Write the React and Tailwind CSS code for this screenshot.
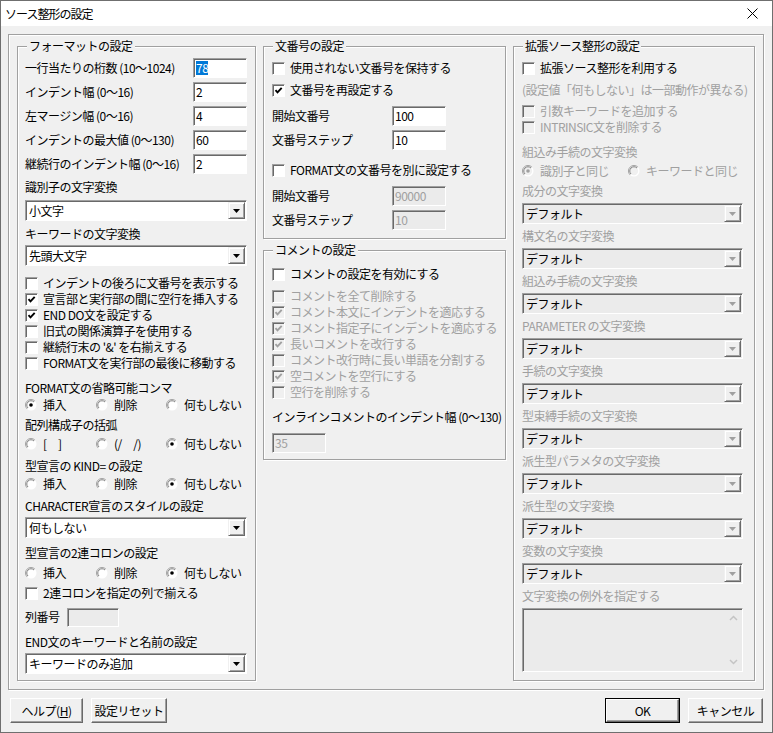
import React from 'react';

function TextBox({ value, selected = false, disabled = false, w = 'w-[54px]', h = 'h-[20px]' }) {
  return (
    <div
      className={`${w} ${h} shrink-0 flex items-center pl-[2px] border border-t-[#a0a0a0] border-l-[#a0a0a0] border-r-white border-b-white shadow-[inset_1px_1px_0_#696969] ${
        disabled ? 'bg-[#ebebeb] text-[#a0a0a0]' : 'bg-white'
      }`}
    >
      {selected ? <span className="bg-[#0078d7] text-white leading-[14px]">{value}</span> : value}
    </div>
  );
}

function Combo({ value, disabled = false, w = 'w-[222px]', className = '' }) {
  return (
    <div
      className={`${w} h-[21px] shrink-0 flex items-center justify-between border border-t-[#a0a0a0] border-l-[#a0a0a0] border-r-white border-b-white shadow-[inset_1px_1px_0_#696969] ${
        disabled ? 'bg-[#ebebeb]' : 'bg-white'
      } ${className}`}
    >
      <span className="pl-[3px] whitespace-nowrap">{value}</span>
      <div className="w-[17px] h-[17px] mr-[1px] flex items-center justify-center bg-[#f0f0f0] border border-t-[#f0f0f0] border-l-[#f0f0f0] border-r-[#696969] border-b-[#696969] shadow-[inset_1px_1px_0_#fff,inset_-1px_-1px_0_#a0a0a0]">
        <svg width="7" height="4" viewBox="0 0 7 4">
          <path d="M0 0h7L3.5 4z" fill={disabled ? '#a0a0a0' : '#000'} />
        </svg>
      </div>
    </div>
  );
}

function Check({ checked = false, disabled = false, label, className = '' }) {
  return (
    <div className={`h-[16px] flex items-center ${className}`}>
      <div
        className={`w-[13px] h-[13px] shrink-0 flex items-center justify-center border border-t-[#a0a0a0] border-l-[#a0a0a0] border-r-white border-b-white shadow-[inset_1px_1px_0_#696969] ${
          disabled ? 'bg-[#f0f0f0]' : 'bg-white'
        }`}
      >
        {checked && (
          <svg width="9" height="9" viewBox="0 0 9 9">
            <path d="M1.5 4.2l2 2.2 4.2-4.6" fill="none" stroke={disabled ? '#a0a0a0' : '#000'} strokeWidth="1.9" />
          </svg>
        )}
      </div>
      <span className={`ml-[5px] whitespace-nowrap ${disabled ? 'text-[#a0a0a0]' : ''}`}>{label}</span>
    </div>
  );
}

function Radio({ on = false, disabled = false, label, className = '' }) {
  return (
    <div className={`h-[16px] flex items-center ${className}`}>
      <svg width="12" height="12" viewBox="0 0 12 12" className="shrink-0">
        <circle cx="6" cy="6" r="5.5" fill="#fff" />
        <path d="M2.1 9.9A5.5 5.5 0 0 1 9.9 2.1" fill="none" stroke="#a0a0a0" />
        <circle cx="6" cy="6" r="4.2" fill={disabled ? '#f0f0f0' : '#fff'} />
        <path d="M3 9A4.2 4.2 0 0 1 9 3" fill="none" stroke="#808080" />
        {on && <circle cx="6" cy="6" r="1.8" fill={disabled ? '#a0a0a0' : '#000'} />}
      </svg>
      <span className={`ml-[6px] whitespace-nowrap ${disabled ? 'text-[#a0a0a0]' : ''}`}>{label}</span>
    </div>
  );
}

function Field({ label, value, labelW, selected, disabled, className = '' }) {
  return (
    <div className={`h-[20px] flex items-center ${className}`}>
      <span className={`${labelW} shrink-0 whitespace-nowrap`}>{label}</span>
      <TextBox value={value} selected={selected} disabled={disabled} />
    </div>
  );
}

function Group({ title, className = '', children }) {
  return (
    <div className={`relative flex flex-col border border-[#a0a0a0] shadow-[inset_1px_1px_0_#fff,1px_1px_0_#fff] ${className}`}>
      <span className="absolute -top-[9px] left-[9px] px-[2px] bg-[#f0f0f0] leading-[16px] whitespace-nowrap">{title}</span>
      {children}
    </div>
  );
}

function Btn({ children, className = '', def = false }) {
  return (
    <div className={`h-[25px] flex ${def ? 'border border-black' : ''} ${className}`}>
      <div className="flex-1 flex items-center justify-center bg-[#f0f0f0] border border-t-white border-l-white border-r-[#696969] border-b-[#696969] shadow-[inset_-1px_-1px_0_#a0a0a0]">
        {children}
      </div>
    </div>
  );
}

function Label({ children, className = '', disabled = false }) {
  return <div className={`h-[16px] whitespace-nowrap ${disabled ? 'text-[#a0a0a0]' : ''} ${className}`}>{children}</div>;
}

function RadioRow({ cols, items, className = '', disabled = false }) {
  return (
    <div className={`flex ${className}`}>
      {items.map((it, i) => (
        <Radio key={i} label={it.label} on={it.on} disabled={disabled} className={cols[i]} />
      ))}
    </div>
  );
}

const COLS3 = ['w-[71px]', 'w-[70px]', 'w-[80px]'];

export default function App() {
  return (
    <div className="w-[773px] h-[733px] bg-[#f0f0f0] border border-[#6f6f6f] flex flex-col text-black text-[12px] leading-[16px] tracking-[-0.5px] font-['Noto_Sans_CJK_JP','Noto_Sans',sans-serif] overflow-hidden">
      <div className="h-[25px] shrink-0 bg-white flex items-center justify-between pl-[4px] pr-[14px]">
        <span className="tracking-[-1px]">ソース整形の設定</span>
        <svg width="11" height="11" viewBox="0 0 11 11">
          <path d="M0.5 0.5l10 10M10.5 0.5l-10 10" stroke="#000" strokeWidth="1" />
        </svg>
      </div>

      <div className="mt-[8px] ml-[7px] w-[756px] h-[656px] shrink-0 flex gap-[7px] pt-[11px] px-[8px] border border-[#a0a0a0] shadow-[inset_1px_1px_0_#fff,1px_1px_0_#fff]">
        {/* left column */}
        <Group title="フォーマットの設定" className="w-[239px] h-[635px] pl-[7px] pr-[8px]">
          <div className="mt-[11px] flex flex-col gap-[4px]">
            <Field labelW="w-[168px]" label="一行当たりの桁数 (10～1024)" value="78" selected />
            <Field labelW="w-[168px]" label="インデント幅 (0～16)" value="2" />
            <Field labelW="w-[168px]" label="左マージン幅 (0～16)" value="4" />
            <Field labelW="w-[168px]" label="インデントの最大値 (0～130)" value="60" />
            <Field labelW="w-[168px]" label="継続行のインデント幅 (0～16)" value="2" />
          </div>
          <Label className="mt-[5px]">識別子の文字変換</Label>
          <Combo className="mt-[5px]" value="小文字" />
          <Label className="mt-[5px]">キーワードの文字変換</Label>
          <Combo className="mt-[3px]" value="先頭大文字" />
          <div className="mt-[9px] flex flex-col">
            <Check label="インデントの後ろに文番号を表示する" />
            <Check label="宣言部と実行部の間に空行を挿入する" checked />
            <Check label="END DO文を設定する" checked />
            <Check label="旧式の関係演算子を使用する" />
            <Check label="継続行末の '&' を右揃えする" />
            <Check label="FORMAT文を実行部の最後に移動する" />
          </div>
          <Label className="mt-[9px]">FORMAT文の省略可能コンマ</Label>
          <RadioRow
            className="mt-[1px]"
            cols={COLS3}
            items={[{ label: '挿入', on: true }, { label: '削除' }, { label: '何もしない' }]}
          />
          <Label className="mt-[4px]">配列構成子の括弧</Label>
          <RadioRow
            className="mt-[3px]"
            cols={COLS3}
            items={[{ label: '[　]' }, { label: '(/　/)' }, { label: '何もしない', on: true }]}
          />
          <Label className="mt-[6px]">型宣言の KIND= の設定</Label>
          <RadioRow
            className="mt-[2px]"
            cols={COLS3}
            items={[{ label: '挿入' }, { label: '削除' }, { label: '何もしない', on: true }]}
          />
          <Label className="mt-[6px]">CHARACTER宣言のスタイルの設定</Label>
          <Combo className="mt-[3px]" value="何もしない" />
          <Label className="mt-[7px]">型宣言の2連コロンの設定</Label>
          <RadioRow
            className="mt-[4px]"
            cols={COLS3}
            items={[{ label: '挿入' }, { label: '削除' }, { label: '何もしない', on: true }]}
          />
          <Check className="mt-[4px]" label="2連コロンを指定の列で揃える" />
          <div className="mt-[6px] h-[20px] flex items-center">
            <span className="w-[42px] shrink-0">列番号</span>
            <TextBox value="" disabled w="w-[52px]" h="h-[19px]" />
          </div>
          <Label className="mt-[7px]">END文のキーワードと名前の設定</Label>
          <Combo className="mt-[3px]" value="キーワードのみ追加" />
        </Group>

        {/* middle column */}
        <div className="w-[243px] flex flex-col">
          <Group title="文番号の設定" className="h-[193px] pl-[8px]">
            <Check className="mt-[13px]" label="使用されない文番号を保持する" />
            <Check className="mt-[6px]" label="文番号を再設定する" checked />
            <Field className="mt-[8px]" labelW="w-[120px]" label="開始文番号" value="100" />
            <Field className="mt-[4px]" labelW="w-[120px]" label="文番号ステップ" value="10" />
            <Check className="mt-[12px]" label="FORMAT文の文番号を別に設定する" />
            <Field className="mt-[8px]" labelW="w-[120px]" label="開始文番号" value="90000" disabled />
            <Field className="mt-[4px]" labelW="w-[120px]" label="文番号ステップ" value="10" disabled />
          </Group>
          <Group title="コメントの設定" className="mt-[11px] h-[210px] pl-[8px]">
            <Check className="mt-[15px]" label="コメントの設定を有効にする" />
            <div className="mt-[6px] flex flex-col">
              <Check disabled label="コメントを全て削除する" />
              <Check disabled checked label="コメント本文にインデントを適応する" />
              <Check disabled checked label="コメント指定子にインデントを適応する" />
              <Check disabled checked label="長いコメントを改行する" />
              <Check disabled label="コメント改行時に長い単語を分割する" />
              <Check disabled checked label="空コメントを空行にする" />
              <Check disabled label="空行を削除する" />
            </div>
            <Label className="mt-[9px]">インラインコメントのインデント幅 (0～130)</Label>
            <div className="mt-[8px]">
              <TextBox value="35" disabled />
            </div>
          </Group>
        </div>

        {/* right column */}
        <Group title="拡張ソース整形の設定" className="w-[242px] h-[635px] pl-[8px]">
          <Check className="mt-[13px]" label="拡張ソース整形を利用する" />
          <Label disabled className="mt-[6px]">(設定値「何もしない」は一部動作が異なる)</Label>
          <Check disabled className="mt-[5px]" label="引数キーワードを追加する" />
          <Check disabled label="INTRINSIC文を削除する" />
          <Label disabled className="mt-[9px]">組込み手続の文字変換</Label>
          <RadioRow
            disabled
            className="mt-[3px]"
            cols={['w-[106px]', 'w-[110px]']}
            items={[{ label: '識別子と同じ', on: true }, { label: 'キーワードと同じ' }]}
          />
          {[
            '成分の文字変換',
            '構文名の文字変換',
            '組込み手続の文字変換',
            'PARAMETER の文字変換',
            '手続の文字変換',
            '型束縛手続の文字変換',
            '派生型パラメタの文字変換',
            '派生型の文字変換',
            '変数の文字変換',
          ].map((t) => (
            <React.Fragment key={t}>
              <Label disabled className="mt-[4px]">{t}</Label>
              <Combo disabled className="mt-[4px]" w="w-[221px]" value="デフォルト" />
            </React.Fragment>
          ))}
          <Label disabled className="mt-[4px]">文字変換の例外を指定する</Label>
          <div className="mt-[4px] w-[221px] h-[64px] flex justify-end bg-[#ebebeb] border border-t-[#a0a0a0] border-l-[#a0a0a0] border-r-white border-b-white shadow-[inset_1px_1px_0_#696969]">
            <div className="w-[17px] flex flex-col items-center justify-between py-[6px]">
              <svg width="9" height="6" viewBox="0 0 9 6">
                <path d="M1 5l3.5-3.5L8 5" fill="none" stroke="#c4c4c4" strokeWidth="1.5" />
              </svg>
              <svg width="9" height="6" viewBox="0 0 9 6">
                <path d="M1 1l3.5 3.5L8 1" fill="none" stroke="#c4c4c4" strokeWidth="1.5" />
              </svg>
            </div>
          </div>
        </Group>
      </div>

      <div className="mt-[8px] mx-[9px] flex items-start">
        <Btn className="w-[73px]">
          <span>
            ヘルプ(<span className="underline">H</span>)
          </span>
        </Btn>
        <Btn className="w-[76px] ml-[8px]">設定リセット</Btn>
        <div className="flex-1" />
        <Btn def className="w-[75px]">OK</Btn>
        <Btn className="w-[75px] ml-[8px]">キャンセル</Btn>
      </div>
    </div>
  );
}
